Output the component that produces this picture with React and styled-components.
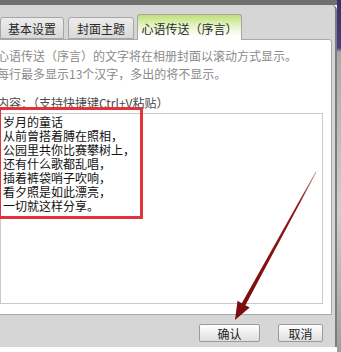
import React from 'react'
import styled, { createGlobalStyle } from 'styled-components'

const Global = createGlobalStyle`
html, body {
  margin: 0;
  padding: 0;
  background: #ffffff;
  overflow: hidden;
}
`

const Page = styled.div`
position: relative;
width: 341px;
height: 352px;
display: flex;
overflow: hidden;
font-family: "Noto Sans CJK SC", "DejaVu Sans", sans-serif;
font-size: 12px;
`

const Window = styled.div`
flex: 0 0 347px;
margin-left: -10px;
display: flex;
flex-direction: column;
`

const TitleBar = styled.div`
height: 5px;
background: #6f6f6f;
`

const Body = styled.div`
height: 342px;
box-sizing: border-box;
background: #d6d6d6;
border-right: 2px solid #7c7c7c;
border-top-right-radius: 5px;
padding-top: 9px;
display: flex;
flex-direction: column;
`

const TabRow = styled.div`
height: 25px;
display: flex;
align-items: flex-end;
padding-left: 10px;
position: relative;
z-index: 1;
`

const Tab = styled.div`
box-sizing: border-box;
width: ${p => p.w}px;
height: ${p => (p.active ? 26 : 22)}px;
margin-right: ${p => p.gap}px;
margin-bottom: ${p => (p.active ? -1 : 0)}px;
border: 1px solid #a6a6a6;
border-bottom: ${p => (p.active ? 'none' : '1px solid #a6a6a6')};
border-radius: 3px 3px 0 0;
background: ${p => (p.active
    ? 'linear-gradient(#bfe07a, #e6f4c8 45%, #ffffff 85%)'
    : 'linear-gradient(#ececec, #d9d9d9)')};
color: #2a2a2a;
display: flex;
align-items: center;
justify-content: center;
padding-top: ${p => (p.active ? 1 : 0)}px;
`

const Panel = styled.div`
margin-left: 6px;
width: 336px;
box-sizing: border-box;
background: #ffffff;
border: 1px solid #a9a9a9;
border-top-right-radius: 3px;
padding: 7px 0 10px 0;
`

const Hint = styled.div`
line-height: 18px;
color: #8a8a8a;
white-space: nowrap;
`

const Label = styled.div`
margin-top: 13px;
line-height: 14px;
color: #4a4a4a;
white-space: nowrap;
`

const TextBox = styled.div`
margin-top: 3px;
margin-left: 3px;
width: 323px;
height: 191px;
box-sizing: border-box;
border: 1px solid #c9c9c9;
padding: 1px 2px;
line-height: 14px;
color: #111111;
`

const ButtonRow = styled.div`
display: flex;
justify-content: flex-end;
gap: 18px;
padding: 9px 12px 0 0;
`

const Button = styled.div`
width: ${p => p.w}px;
height: 18px;
box-sizing: border-box;
border: 1px solid #9a9a9a;
border-radius: 2px;
background: linear-gradient(#ffffff, #ececec 60%, #dedede);
color: #222222;
display: flex;
align-items: center;
justify-content: center;
font-size: 12px;
`

const BottomStrip = styled.div`
flex: 1;
background: #ffffff;
`

const Side = styled.div`
flex: 1;
background: linear-gradient(#3c2d6a 0, #4b3c80 48px, #a9a9a9 52px, #cfcfcf 60%, #9e9e9e);
`

const RedBox = styled.div`
position: absolute;
left: -2px;
top: 107px;
width: 145px;
height: 112px;
box-sizing: border-box;
border: 3px solid #e2333d;
pointer-events: none;
`

const Arrow = styled.svg`
position: absolute;
left: 0;
top: 0;
pointer-events: none;
`

const poem = [
  '岁月的童话',
  '从前曾搭着膊在照相，',
  '公园里共你比赛攀树上，',
  '还有什么歌都乱唱，',
  '插着裤袋哨子吹响，',
  '看夕照是如此漂亮，',
  '一切就这样分享。',
]

export default function App() {
  return (
    <>
      <Global />
      <Page>
        <Window>
          <TitleBar />
          <Body>
            <TabRow>
              <Tab w={64} gap={4}>基本设置</Tab>
              <Tab w={66} gap={3}>封面主题</Tab>
              <Tab w={105} gap={0} active>心语传送（序言）</Tab>
            </TabRow>
            <Panel>
              <Hint>心语传送（序言）的文字将在相册封面以滚动方式显示。</Hint>
              <Hint>每行最多显示13个汉字，多出的将不显示。</Hint>
              <Label>内容：（支持快捷键Ctrl+V粘贴）</Label>
              <TextBox>
                {poem.map(line => <div key={line}>{line}</div>)}
              </TextBox>
            </Panel>
            <ButtonRow>
              <Button w={61}>确认</Button>
              <Button w={45}>取消</Button>
            </ButtonRow>
          </Body>
          <BottomStrip />
        </Window>
        <Side />
        <RedBox />
        <Arrow width="341" height="352" viewBox="0 0 341 352">
          <defs>
            <linearGradient id="shaft" x1="316" y1="172" x2="236" y2="320" gradientUnits="userSpaceOnUse">
              <stop offset="0" stopColor="#c9a0a0" />
              <stop offset="0.2" stopColor="#8e1a1a" />
              <stop offset="1" stopColor="#7a0c0c" />
            </linearGradient>
          </defs>
          <polygon
            points="315.6,171.8 316.4,172.2 245.4,305.2 249.7,307.6 235,320 237.5,300.8 241.8,303.2"
            fill="url(#shaft)"
          />
        </Arrow>
      </Page>
    </>
  )
}
